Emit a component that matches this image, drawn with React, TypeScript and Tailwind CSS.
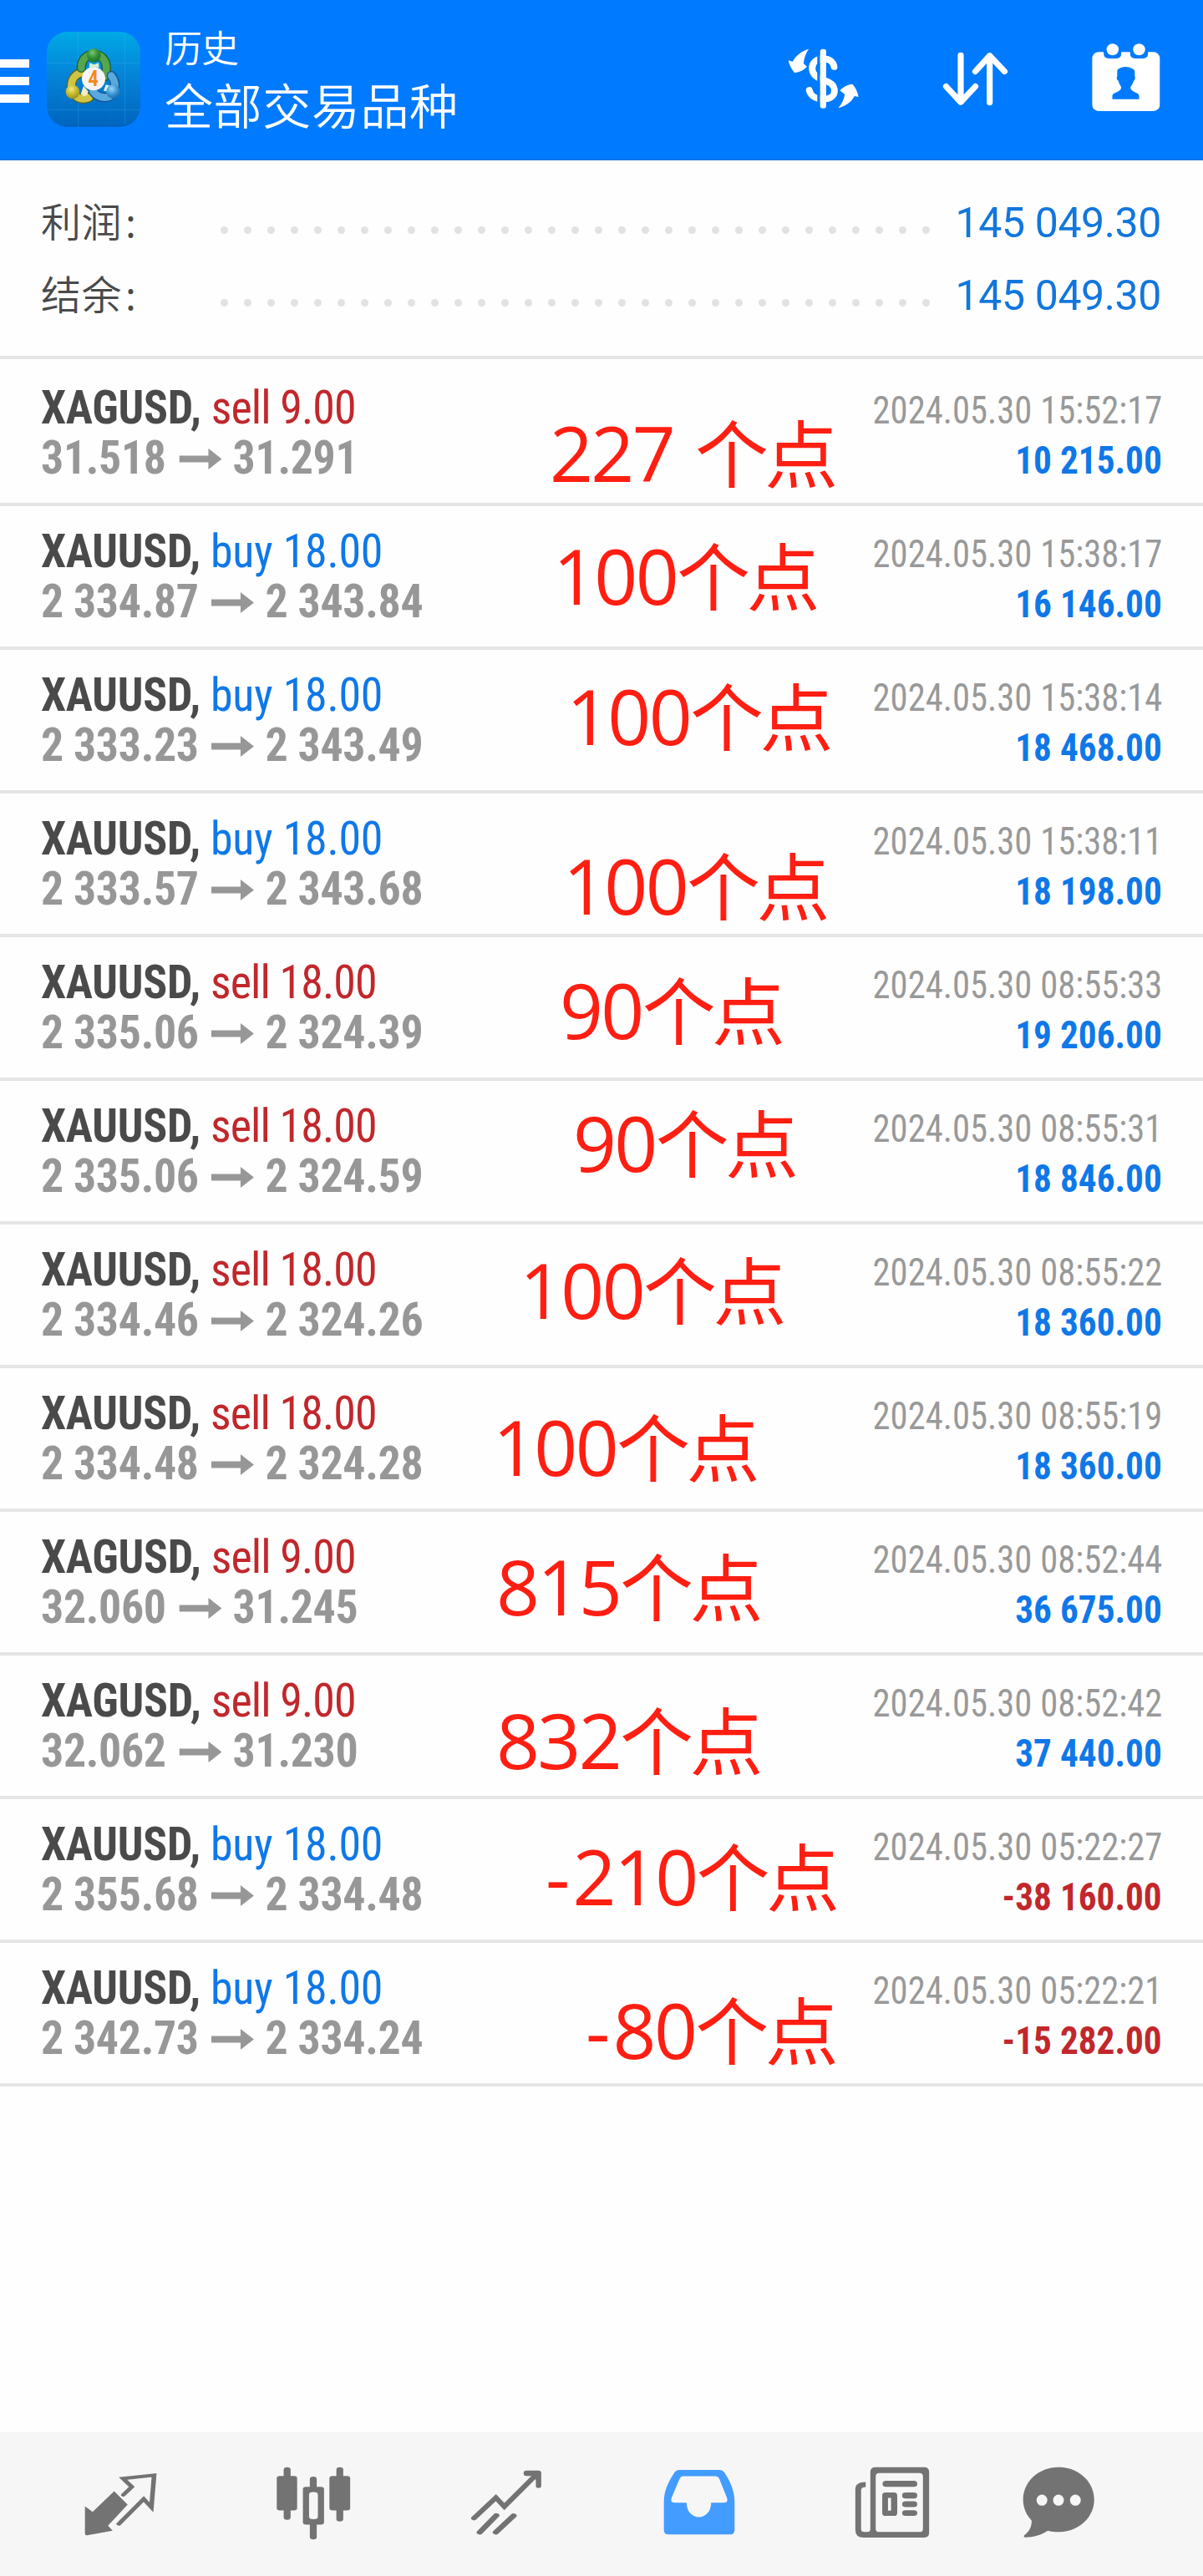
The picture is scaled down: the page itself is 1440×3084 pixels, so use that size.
import type { ReactNode } from 'react';

type Deal = {
  symbol: string;
  side: 'buy' | 'sell';
  volume: string;
  open: string;
  close: string;
  time: string;
  profit: string;
  note: { value: string; left: number; top: number };
};

const deals: Deal[] = [
  { symbol: 'XAGUSD', side: 'sell', volume: '9.00', open: '31.518', close: '31.291', time: '2024.05.30 15:52:17', profit: '10 215.00', note: { value: '227 ', left: 658, top: 60 } },
  { symbol: 'XAUUSD', side: 'buy', volume: '18.00', open: '2 334.87', close: '2 343.84', time: '2024.05.30 15:38:17', profit: '16 146.00', note: { value: '100', left: 662, top: 35 } },
  { symbol: 'XAUUSD', side: 'buy', volume: '18.00', open: '2 333.23', close: '2 343.49', time: '2024.05.30 15:38:14', profit: '18 468.00', note: { value: '100', left: 678, top: 31 } },
  { symbol: 'XAUUSD', side: 'buy', volume: '18.00', open: '2 333.57', close: '2 343.68', time: '2024.05.30 15:38:11', profit: '18 198.00', note: { value: '100', left: 674, top: 62 } },
  { symbol: 'XAUUSD', side: 'sell', volume: '18.00', open: '2 335.06', close: '2 324.39', time: '2024.05.30 08:55:33', profit: '19 206.00', note: { value: '90', left: 670, top: 39 } },
  { symbol: 'XAUUSD', side: 'sell', volume: '18.00', open: '2 335.06', close: '2 324.59', time: '2024.05.30 08:55:31', profit: '18 846.00', note: { value: '90', left: 686, top: 26 } },
  { symbol: 'XAUUSD', side: 'sell', volume: '18.00', open: '2 334.46', close: '2 324.26', time: '2024.05.30 08:55:22', profit: '18 360.00', note: { value: '100', left: 622, top: 30 } },
  { symbol: 'XAUUSD', side: 'sell', volume: '18.00', open: '2 334.48', close: '2 324.28', time: '2024.05.30 08:55:19', profit: '18 360.00', note: { value: '100', left: 590, top: 46 } },
  { symbol: 'XAGUSD', side: 'sell', volume: '9.00', open: '32.060', close: '31.245', time: '2024.05.30 08:52:44', profit: '36 675.00', note: { value: '815', left: 594, top: 41 } },
  { symbol: 'XAGUSD', side: 'sell', volume: '9.00', open: '32.062', close: '31.230', time: '2024.05.30 08:52:42', profit: '37 440.00', note: { value: '832', left: 594, top: 53 } },
  { symbol: 'XAUUSD', side: 'buy', volume: '18.00', open: '2 355.68', close: '2 334.48', time: '2024.05.30 05:22:27', profit: '-38 160.00', note: { value: '-210', left: 653, top: 44 } },
  { symbol: 'XAUUSD', side: 'buy', volume: '18.00', open: '2 342.73', close: '2 334.24', time: '2024.05.30 05:22:21', profit: '-15 282.00', note: { value: '-80', left: 701, top: 56 } },
];

const summary = [
  { label: '利润', value: '145 049.30' },
  { label: '结余', value: '145 049.30' },
];

function Logo() {
  return (
    <svg viewBox="18 24 336 342" preserveAspectRatio="none" className="w-[112px] h-[114px] mt-[38px] ml-[21px] shrink-0">
      <defs>
        <linearGradient id="logoBg" x1="0" y1="0" x2="0" y2="1">
          <stop offset="0" stopColor="#00a9e6" />
          <stop offset="0.45" stopColor="#0484d8" />
          <stop offset="1" stopColor="#0064bd" />
        </linearGradient>
        <radialGradient id="logoGreen" cx="0.4" cy="0.3" r="0.8">
          <stop offset="0" stopColor="#7cc46c" />
          <stop offset="0.5" stopColor="#2f8f37" />
          <stop offset="1" stopColor="#176a2a" />
        </radialGradient>
        <radialGradient id="logoYellow" cx="0.4" cy="0.3" r="0.8">
          <stop offset="0" stopColor="#f0ea80" />
          <stop offset="0.5" stopColor="#c4b72b" />
          <stop offset="1" stopColor="#8d8420" />
        </radialGradient>
        <radialGradient id="logoBlue" cx="0.4" cy="0.3" r="0.8">
          <stop offset="0" stopColor="#9bd4f5" />
          <stop offset="0.5" stopColor="#3c98d6" />
          <stop offset="1" stopColor="#145f9f" />
        </radialGradient>
      </defs>
      <rect x="18" y="24" width="336" height="342" rx="74" fill="url(#logoBg)" />
      <path d="M131 24V366M299 36V354M18 136H354M18 304H354" stroke="#5cc4f5" strokeWidth="2" opacity="0.35" />
      <path d="M75 30V360M187 24V366M243 24V366M18 80H354M18 192H354M18 248H354" stroke="#5cc4f5" strokeWidth="1" opacity="0.15" />
      <g fill="none" strokeLinecap="round">
        <path d="M170 260C134 276 104 248 106 216C108 190 124 174 146 170" stroke="#5f6420" strokeWidth="34" />
        <path d="M170 260C134 276 104 248 106 216C108 190 124 174 146 170" stroke="#cfc544" strokeWidth="26" />
        <path d="M142 154C142 122 162 106 188 106C216 106 232 128 232 156C232 168 230 176 227 184" stroke="#1c5f33" strokeWidth="34" />
        <path d="M142 154C142 122 162 106 188 106C216 106 232 128 232 156C232 168 230 176 227 184" stroke="#55a64f" strokeWidth="26" />
        <path d="M184 238C204 266 246 268 258 240C268 214 260 194 250 182" stroke="#17548d" strokeWidth="34" />
        <path d="M184 238C204 266 246 268 258 240C268 214 260 194 250 182" stroke="#57a9df" strokeWidth="26" />
      </g>
      <path d="M140 248L150 218L166 238L164 252L150 256Z" fill="#f3eebb" />
      <path d="M222 236L230 214L246 218L240 240Z" fill="#dff1fb" />
      <path d="M172 136L188 142L204 136L206 152H170Z" fill="#d9f0d2" />
      <circle cx="187" cy="109" r="25" fill="url(#logoGreen)" />
      <circle cx="111" cy="240" r="25" fill="url(#logoYellow)" />
      <circle cx="256" cy="239" r="25" fill="url(#logoBlue)" />
      <circle cx="186" cy="193" r="42" fill="#f6f4f4" />
      <text x="185" y="219" textAnchor="middle" fontSize="76" fill="#f28a1e" className="font-['Roboto_Condensed',sans-serif] font-semibold">4</text>
    </svg>
  );
}

function CurrencyIcon() {
  return (
    <svg viewBox="120 172 254 222" preserveAspectRatio="none" className="w-[87px] h-[74px] mt-[57px]">
      <path
        d="M285 241C282 222 268 212 247 212C222 212 208 226 208 246C208 270 226 280 247 288C270 297 286 304 286 328C286 346 270 357 247 357C218 357 202 344 198 325"
        fill="none"
        stroke="#fff"
        strokeWidth="23"
        strokeLinecap="round"
      />
      <rect x="226" y="180" width="10" height="206" fill="#007aff" />
      <rect x="236" y="177" width="21" height="213" rx="9" fill="#fff" />
      <path d="M196 177C186 190 180 210 178 229L190 240C180 252 165 260 147 263C136 250 128 235 125 218L140 222C150 202 170 184 196 177Z" fill="#fff" />
      <path d="M299 389C312 374 320 356 322 340L305 326C316 313 332 305 349 303C360 316 368 332 370 349L356 346C346 366 326 384 299 389Z" fill="#fff" />
    </svg>
  );
}

function SortIcon() {
  return (
    <svg viewBox="658 182 236 202" preserveAspectRatio="none" className="w-[81px] h-[67px] mt-[61px]">
      <g fill="none" stroke="#fff" strokeWidth="21" strokeLinecap="round" strokeLinejoin="round">
        <path d="M725 198V367M674 310L725 367L776 310" />
        <path d="M826 368V199M776 256L826 199L878 256" />
      </g>
    </svg>
  );
}

function CalendarIcon() {
  return (
    <svg viewBox="1178 150 244 256" preserveAspectRatio="none" className="w-[84px] h-[85px] mt-[50px]">
      <rect x="1182" y="187" width="235" height="213" rx="22" fill="#fff" />
      <path d="M1222 180H1283V192Q1283 210 1265 210H1240Q1222 210 1222 192ZM1314 180H1376V192Q1376 210 1358 210H1332Q1314 210 1314 192Z" fill="#007aff" />
      <circle cx="1253" cy="178" r="21" fill="#fff" />
      <circle cx="1345" cy="178" r="21" fill="#fff" />
      <path
        d="M1252 357V344C1252 332 1283 332 1283 314C1280 306 1274 300 1273 290C1267 288 1266 276 1269 274V256C1269 246 1278 246 1282 243C1294 238 1312 240 1319 246C1327 247 1330 252 1330 260V274C1333 278 1331 288 1326 291C1325 300 1319 306 1315 314C1315 332 1345 332 1345 344V357Z"
        fill="#007aff"
      />
    </svg>
  );
}

function NavIcon({ viewBox, children }: { viewBox: string; children: ReactNode }) {
  return (
    <svg viewBox={viewBox} preserveAspectRatio="none" className="w-[92px] h-[88px]">
      {children}
    </svg>
  );
}

function QuotesIcon() {
  return (
    <NavIcon viewBox="212 160 200 265">
      <path d="M296 249L331 297L280 373L292 391L226 408Q220 408 220 400V303L240 323Z" fill="#737373" />
      <path d="M320 262L342 233L319 203L400 191L393 307L373 277L308 367" fill="none" stroke="#737373" strokeWidth="12" strokeLinecap="round" />
    </NavIcon>
  );
}

function ChartIcon() {
  return (
    <NavIcon viewBox="714 160 200 265">
      <g fill="#737373">
        <rect x="737" y="162" width="18" height="190" rx="9" />
        <rect x="719" y="194" width="53" height="124" rx="8" />
        <rect x="874" y="162" width="18" height="196" rx="9" />
        <rect x="856" y="194" width="54" height="124" rx="8" />
        <rect x="805" y="196" width="18" height="227" rx="9" />
        <rect x="787" y="233" width="55" height="136" rx="8" />
      </g>
      <rect x="803" y="252" width="23" height="98" rx="10" fill="#f6f6f6" />
    </NavIcon>
  );
}

function TradeIcon() {
  return (
    <NavIcon viewBox="1217 160 200 265">
      <path d="M1233 346L1290 272L1312 304L1396 188" fill="none" stroke="#737373" strokeWidth="15" strokeLinecap="round" />
      <path d="M1248 397L1291 336M1290 397L1336 337" fill="none" stroke="#737373" strokeWidth="16" strokeLinecap="round" />
      <path d="M1370 174H1400Q1408 174 1408 182V230Q1408 237 1401 237Q1394 237 1394 230V208L1384 194H1370Q1362 194 1362 184Q1362 174 1370 174Z" fill="#737373" />
    </NavIcon>
  );
}

function HistoryIcon() {
  return (
    <NavIcon viewBox="154 160 200 265">
      <path
        fillRule="evenodd"
        d="M202 172H307Q315 172 319 180C334 212 346 244 346 288V388Q346 405 334 405H174Q162 405 162 388V288C162 244 175 212 190 180Q194 172 202 172ZM213 195Q206 195 203 204L182 272Q178 290 189 290H221C221 322 236 342 253 342C270 342 285 322 285 290H319Q330 290 326 272L306 204Q303 195 296 195Z"
        fill="#439cff"
      />
    </NavIcon>
  );
}

function NewsIcon() {
  return (
    <NavIcon viewBox="658 160 200 265">
      <path
        fillRule="evenodd"
        d="M715 162H841Q854 162 854 180V398Q854 416 841 416H684Q662 416 662 388V242Q662 216 689 216V234Q677 234 677 246V386Q677 396 686 396H693Q701 396 701 386V180Q701 162 715 162ZM724 183Q715 183 715 195V384Q715 396 724 396H829Q838 396 838 384V195Q838 183 829 183Z"
        fill="#737373"
      />
      <g fill="#737373">
        <rect x="733" y="211" width="90" height="22" rx="9" />
        <path fillRule="evenodd" d="M740 253H763Q771 253 771 264V327Q771 338 763 338H740Q732 338 732 327V264Q732 253 740 253ZM747 273V319H755V273Z" />
        <rect x="784" y="253" width="39" height="22" rx="9" />
        <rect x="784" y="285" width="39" height="21" rx="9" />
        <rect x="784" y="317" width="39" height="21" rx="9" />
      </g>
    </NavIcon>
  );
}

function ChatIcon() {
  return (
    <NavIcon viewBox="1091 160 200 265">
      <path
        d="M1191 162C1243 162 1284 214 1284 279C1284 344 1243 396 1191 396C1181 396 1172 394 1163 391C1148 406 1126 415 1105 415Q1099 415 1102 408C1115 394 1122 376 1121 354C1107 334 1099 308 1099 279C1099 214 1140 162 1191 162Z"
        fill="#737373"
      />
      <g fill="#f6f6f6">
        <ellipse cx="1148" cy="281" rx="14" ry="20" />
        <ellipse cx="1191" cy="281" rx="14" ry="20" />
        <ellipse cx="1235" cy="281" rx="14" ry="20" />
      </g>
    </NavIcon>
  );
}

function Header() {
  return (
    <header className="flex items-start h-[192px] bg-[#007aff] border-b border-[#1c6fd9] pr-[50px] text-white">
      <div className="flex flex-col gap-[11px] mt-[71px] shrink-0">
        <div className="w-[35px] h-[10px] bg-white" />
        <div className="w-[35px] h-[10px] bg-white" />
        <div className="w-[35px] h-[10px] bg-white" />
      </div>
      <Logo />
      <div className="ml-[29px] mt-[26px] flex flex-col font-['Noto_Sans_CJK_SC',sans-serif] font-[350] whitespace-nowrap">
        <span className="text-[45px] leading-[60px] tracking-[-1px]">历史</span>
        <span className="text-[58px] leading-[77px] tracking-[0.6px]">全部交易品种</span>
      </div>
      <div className="ml-auto flex items-start gap-[98px]">
        <CurrencyIcon />
        <SortIcon />
        <CalendarIcon />
      </div>
    </header>
  );
}

function SummaryRow({ label, value }: { label: string; value: string }) {
  return (
    <div className="flex items-baseline h-[87px] leading-[87px]">
      <span className="w-[215px] text-[48px] tracking-[0.5px] font-['Noto_Sans_CJK_SC',sans-serif] font-[350] text-[#4a4a4a]">
        {label}
        <span className="ml-[4px]">:</span>
      </span>
      <div className="flex justify-between w-[849px] mt-[51px] self-start">
        {Array.from({ length: 31 }, (_, i) => (
          <span key={i} className="w-[9px] h-[9px] rounded-full bg-[#e2e2e2]" />
        ))}
      </div>
      <span className="ml-auto text-[50px] tracking-[-0.4px] text-[#1276dd]">{value}</span>
    </div>
  );
}

function DealRow({ deal }: { deal: Deal }) {
  const { note } = deal;
  const loss = deal.profit.startsWith('-');
  return (
    <li className="relative h-[172px] pt-[24px] pl-[49px] pr-[49px] border-b-4 border-[#e5e5e5] font-['Roboto_Condensed',sans-serif] text-[56px] leading-[60px] whitespace-nowrap">
      <div className="flex items-baseline justify-between h-[60px]">
        <p className="whitespace-pre origin-left scale-x-[0.962]">
          <span className="font-bold tracking-[-0.3px] text-[#4a4a4a]">{deal.symbol}, </span>
          {deal.side === 'buy' ? (
            <span className="tracking-[-0.2px] text-[#0f78e8]">buy {deal.volume}</span>
          ) : (
            <span className="tracking-[-0.9px] text-[#c1272b]">sell {deal.volume}</span>
          )}
        </p>
        <span className="text-[47px] text-[#999] origin-right scale-x-[0.907]">{deal.time}</span>
      </div>
      <div className="flex items-baseline justify-between h-[60px]">
        <p className="flex items-center font-bold tracking-[-0.35px] text-[#979797] origin-left scale-x-[0.962]">
          {deal.open}
          <svg viewBox="0 0 51 25" className="w-[53px] h-[25px] ml-[16px] mr-[14px] mt-[2px] fill-[#979797]" preserveAspectRatio="none">
            <path d="M0 8.5H35V0L51 12.5L35 25V16.5H0Z" />
          </svg>
          {deal.close}
        </p>
        <span className={`text-[47px] font-bold origin-right scale-x-[0.92] ${loss ? 'text-[#c1272b]' : 'text-[#0f78e8]'}`}>
          {deal.profit}
        </span>
      </div>
      {/* hand-written point count laid over the row */}
      <div
        className="absolute flex items-baseline whitespace-pre leading-[90px] text-[#ff1e12]"
        style={{ left: note.left, top: note.top }}
      >
        <span className="text-[91px] tracking-[-2.7px] [word-spacing:5px] font-['Open_Sans',sans-serif]">
          {note.value.startsWith('-') && <span className="mr-[6px]">-</span>}
          {note.value.replace('-', '')}
        </span>
        <span className="text-[88px] tracking-[-4.6px] font-['Noto_Sans_CJK_SC',sans-serif]">个点</span>
      </div>
    </li>
  );
}

function BottomNav() {
  return (
    <nav className="mt-auto flex h-[172px] pt-[41px] pl-[28px] bg-[#f6f6f6]">
      {[QuotesIcon, ChartIcon, TradeIcon, HistoryIcon, NewsIcon].map((Icon, i) => (
        <div key={i} className="flex justify-center w-[231px]">
          <Icon />
        </div>
      ))}
      <div className="flex justify-center w-[167px]">
        <ChatIcon />
      </div>
    </nav>
  );
}

export default function App() {
  return (
    <div className="flex flex-col w-[1440px] h-[3084px] bg-[#fefefe] overflow-hidden font-['Roboto',sans-serif]">
      <Header />
      <section className="h-[238px] pt-[28px] pl-[49px] pr-[50px] border-b-4 border-[#e5e5e5]">
        {summary.map(row => (
          <SummaryRow key={row.label} label={row.label} value={row.value} />
        ))}
      </section>
      <ul className="pt-[4px]">
        {deals.map(deal => (
          <DealRow key={deal.time} deal={deal} />
        ))}
      </ul>
      <BottomNav />
    </div>
  );
}
